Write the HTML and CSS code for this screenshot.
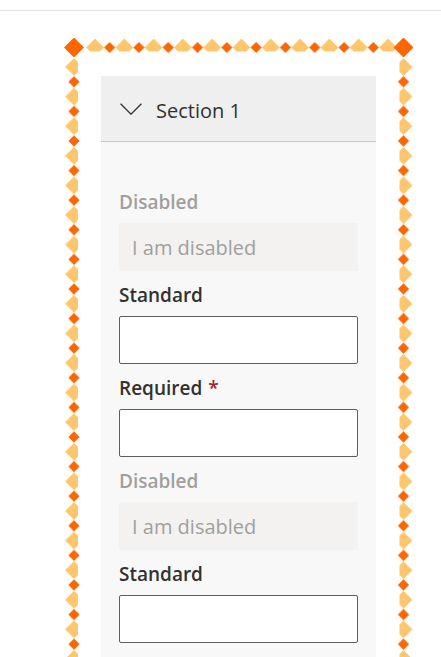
FILE: index.html
```html
<!DOCTYPE html>
<html lang="en">
<head>
<meta charset="utf-8">
<title>Section 1</title>
<link rel="stylesheet" href="styles.css">
</head>
<body>
<div class="topbar"></div>
<main class="page">
  <div class="frame">
    <svg class="frame-art" aria-hidden="true">
      <defs>
        <polygon id="dk" points="0,-5.6 5.6,0 0,5.6 -5.6,0" fill="#ff6600"/>
        <polygon id="cn" points="0,-10 10,0 0,10 -10,0" fill="#ff6600"/>
        <polygon id="ltT" points="0,-8.9 8.9,0 4.9,4 -4.9,4 -8.9,0" fill="#ffc66d"/>
        <polygon id="ltB" points="0,8.9 8.9,0 4.9,-4 -4.9,-4 -8.9,0" fill="#ffc66d"/>
        <polygon id="ltL" points="-8.9,0 0,-8.9 4,-4.9 4,4.9 0,8.9" fill="#ffc66d"/>
        <polygon id="ltR" points="8.9,0 0,-8.9 -4,-4.9 -4,4.9 0,8.9" fill="#ffc66d"/>
        <pattern id="pt" patternUnits="userSpaceOnUse" x="22.1" y="0" width="29.3" height="20">
          <use href="#ltT" x="8.9" y="9.5"/>
          <use href="#dk" x="23.55" y="9.5"/>
        </pattern>
        <pattern id="pb" patternUnits="userSpaceOnUse" x="22.1" y="-20" width="29.3" height="20">
          <use href="#ltB" x="8.9" y="10.5"/>
          <use href="#dk" x="23.55" y="10.5"/>
        </pattern>
        <pattern id="pl" patternUnits="userSpaceOnUse" x="0" y="20.1" width="20" height="29.6">
          <use href="#ltL" x="10" y="8.9"/>
          <use href="#dk" x="10" y="23.7"/>
        </pattern>
        <pattern id="pr" patternUnits="userSpaceOnUse" x="329" y="20.1" width="20" height="29.6">
          <use href="#ltR" x="10.5" y="8.9"/>
          <use href="#dk" x="10.5" y="23.7"/>
        </pattern>
      </defs>
      <rect x="22.1" y="0" width="310.8" height="20" fill="url(#pt)"/>
      <rect x="0" y="20.1" width="20" height="3000" fill="url(#pl)"/>
      <rect x="329" y="20.1" width="20" height="3000" fill="url(#pr)"/>
      <use href="#cn" x="10" y="9.5"/>
      <use href="#cn" x="339.5" y="9.5"/>
      <svg y="100%" overflow="visible">
        <rect x="0" y="-20" width="349" height="20" fill="#ffffff"/>
        <rect x="22.1" y="-20" width="310.8" height="20" fill="url(#pb)"/>
        <use href="#cn" x="10" y="-9.5"/>
        <use href="#cn" x="339.5" y="-9.5"/>
      </svg>
    </svg>
    <section class="accordion">
      <div class="acc-head">
        <svg class="chevron" viewBox="0 0 22 12" aria-hidden="true">
          <path d="M0.6 0.8 L11 11.2 L21.4 0.8" fill="none" stroke="#323130" stroke-width="1.3"/>
        </svg>
        <span class="acc-title">Section 1</span>
      </div>
      <div class="acc-body">
        <div class="field">
          <label class="label is-disabled" for="f1">Disabled</label>
          <input class="input" id="f1" type="text" value="I am disabled" disabled>
        </div>
        <div class="field">
          <label class="label" for="f2">Standard</label>
          <input class="input" id="f2" type="text">
        </div>
        <div class="field">
          <label class="label" for="f3">Required<span class="req">*</span></label>
          <input class="input" id="f3" type="text" required>
        </div>
        <div class="field">
          <label class="label is-disabled" for="f4">Disabled</label>
          <input class="input" id="f4" type="text" value="I am disabled" disabled>
        </div>
        <div class="field">
          <label class="label" for="f5">Standard</label>
          <input class="input" id="f5" type="text">
        </div>
      </div>
    </section>
  </div>
</main>
</body>
</html>
```

FILE: styles.css
```css
html, body {
  margin: 0;
  overflow: hidden;
  background: #ffffff;
}

body {
  font-family: "Open Sans", "Noto Sans", sans-serif;
  color: #323130;
}

.topbar {
  height: 10px;
  border-bottom: 1px solid #e6e6e6;
}

.page {
  padding: 27px 0 0 64px;
}

.frame {
  position: relative;
  width: 349px;
  box-sizing: border-box;
  padding: 38px 37px 37px;
}

.frame-art {
  position: absolute;
  inset: 0;
  width: 100%;
  height: 100%;
  overflow: hidden;
  pointer-events: none;
}

.acc-head {
  display: flex;
  align-items: center;
  gap: 14px;
  height: 65px;
  padding: 0 18px 0 19px;
  background: #efefef;
  border-bottom: 1px solid #c8c8c8;
}

.chevron {
  width: 22px;
  height: 12px;
  margin-top: 1px;
  flex: none;
}

.acc-title {
  font-size: 20px;
  line-height: 28px;
  margin-top: 4px;
  color: #323130;
}

.acc-body {
  background: #f8f8f8;
  padding: 36px 18px 40px;
}

.label {
  display: block;
  font-weight: 600;
  font-size: 19px;
  line-height: 28px;
  padding: 10px 0 7px;
  color: #323130;
}

.label.is-disabled {
  color: #a19f9d;
}

.req {
  color: #a4262c;
  padding-left: 6px;
}

.input {
  display: block;
  box-sizing: border-box;
  width: 100%;
  height: 48px;
  margin: 0;
  padding: 0 12px;
  border: 1px solid #605e5c;
  border-radius: 2px;
  background: #ffffff;
  font-family: "Open Sans", "Noto Sans", sans-serif;
  font-size: 20px;
  color: #323130;
  outline: none;
}

.input:disabled {
  background: #f3f2f1;
  border-color: #f3f2f1;
  color: #a19f9d;
  -webkit-text-fill-color: #a19f9d;
  opacity: 1;
}
```
